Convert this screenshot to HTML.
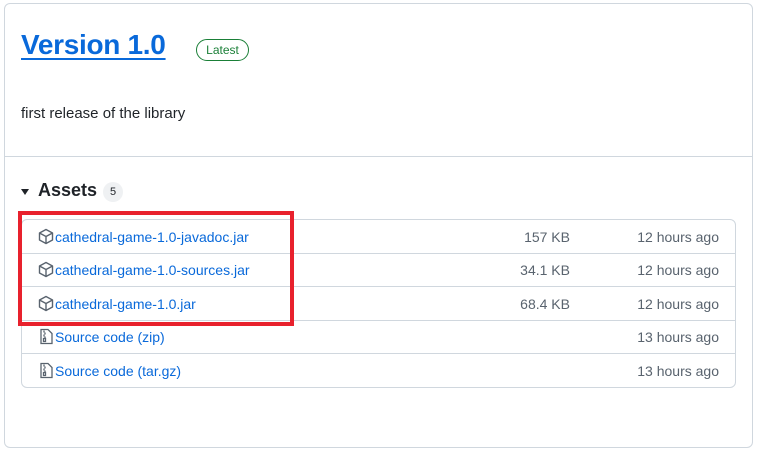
<!DOCTYPE html>
<html><head><meta charset="utf-8"><style>
*{margin:0;padding:0;box-sizing:border-box}
body{width:758px;height:455px;background:#fff;font-family:"Liberation Sans","DejaVu Sans",sans-serif;position:relative;overflow:hidden}
.card{position:absolute;left:4px;top:3px;width:749px;height:445px;border:1px solid #d0d7de;border-radius:6px}
.abs{position:absolute;white-space:nowrap}
.title{left:21px;top:29px;font-size:28px;font-weight:bold;color:#0969da;text-decoration:underline;text-decoration-thickness:2px;text-underline-offset:4px;letter-spacing:-0.3px}
.badge{left:196px;top:39px;width:53px;height:22px;border:1px solid #1a7f37;border-radius:12px;color:#1a7f37;font-size:12px;text-align:center;line-height:20px}
.desc{left:21px;top:105px;font-size:15px;color:#1f2328}
.div{position:absolute;left:5px;top:156px;width:747px;height:1px;background:#d0d7de}
.assets{left:38px;top:180px;font-size:18px;font-weight:bold;color:#1f2328}
.count{left:103px;top:182px;width:20px;height:20px;border-radius:10px;background:#eff1f3;font-size:11px;text-align:center;line-height:20px;color:#1f2328}
.table{position:absolute;left:21px;top:219px;width:715px;height:169px;border:1px solid #d0d7de;border-radius:6px}
.row{position:absolute;left:0;width:713px;height:34px;border-bottom:1px solid #d0d7de}
.row svg{position:absolute;left:16px;top:8px}
.name{position:absolute;left:33px;top:9px;font-size:14px;color:#0969da}
.size{position:absolute;right:165px;top:9px;font-size:14px;color:#59636e}
.time{position:absolute;right:16px;top:9px;font-size:14px;color:#59636e}
.red{position:absolute;left:18px;top:211px;width:276px;height:115px;border:4px solid #e8212d}
</style></head><body>
<div class="card"></div>
<div class="abs title">Version 1.0</div>
<div class="abs badge">Latest</div>
<div class="abs desc">first release of the library</div>
<div class="div"></div>
<svg class="abs" style="left:20px;top:187px" width="10" height="10"><path d="M1 2 L9 2 L5 8 Z" fill="#1f2328"/></svg>
<div class="abs assets">Assets</div>
<div class="abs count">5</div>
<div class="table">
 <div class="row" style="top:0"><svg width="16" height="17" viewBox="0 0 16 16"><path d="M8 1 L14.5 4.5 L14.5 11.5 L8 15 L1.5 11.5 L1.5 4.5 Z M1.5 4.5 L8 8 L14.5 4.5 M8 8 L8 15" fill="none" stroke="#59636e" stroke-width="1.4" stroke-linejoin="round"/></svg><div class="name">cathedral-game-1.0-javadoc.jar</div><div class="size">157 KB</div><div class="time">12 hours ago</div></div>
 <div class="row" style="top:33px"><svg width="16" height="17" viewBox="0 0 16 16"><path d="M8 1 L14.5 4.5 L14.5 11.5 L8 15 L1.5 11.5 L1.5 4.5 Z M1.5 4.5 L8 8 L14.5 4.5 M8 8 L8 15" fill="none" stroke="#59636e" stroke-width="1.4" stroke-linejoin="round"/></svg><div class="name">cathedral-game-1.0-sources.jar</div><div class="size">34.1 KB</div><div class="time">12 hours ago</div></div>
 <div class="row" style="top:67px"><svg width="16" height="17" viewBox="0 0 16 16"><path d="M8 1 L14.5 4.5 L14.5 11.5 L8 15 L1.5 11.5 L1.5 4.5 Z M1.5 4.5 L8 8 L14.5 4.5 M8 8 L8 15" fill="none" stroke="#59636e" stroke-width="1.4" stroke-linejoin="round"/></svg><div class="name">cathedral-game-1.0.jar</div><div class="size">68.4 KB</div><div class="time">12 hours ago</div></div>
 <div class="row" style="top:100px"><svg width="16" height="17" viewBox="0 0 16 16"><path d="M3 1 L10 1 L14 5 L14 15 L3 15 Z M6 2 V4 M7 4 V6 M6 6 V8 M7 8 V10 M5.5 10 H7.5 V13 H5.5 Z" fill="none" stroke="#59636e" stroke-width="1.3"/></svg><div class="name">Source code (zip)</div><div class="time">13 hours ago</div></div>
 <div class="row" style="top:134px;border-bottom:none"><svg width="16" height="17" viewBox="0 0 16 16"><path d="M3 1 L10 1 L14 5 L14 15 L3 15 Z M6 2 V4 M7 4 V6 M6 6 V8 M7 8 V10 M5.5 10 H7.5 V13 H5.5 Z" fill="none" stroke="#59636e" stroke-width="1.3"/></svg><div class="name">Source code (tar.gz)</div><div class="time">13 hours ago</div></div>
</div>
<div class="red"></div>
</body></html>
